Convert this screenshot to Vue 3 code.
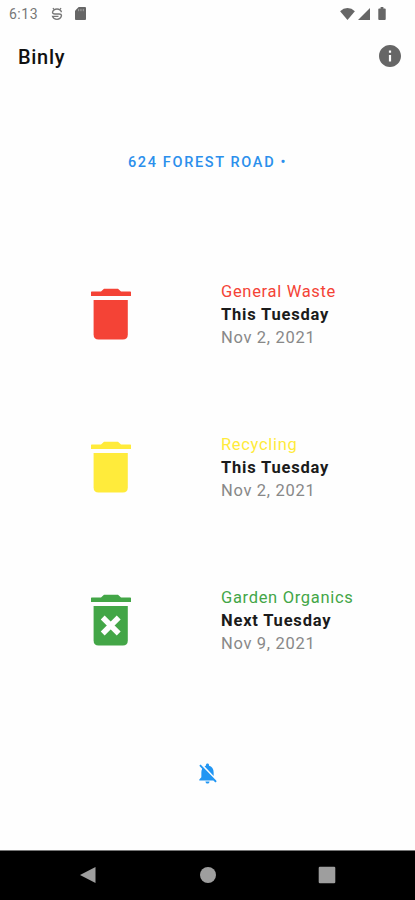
<script setup>
import { ref } from 'vue'

// ============================================================
// Collection data
// ============================================================
const address = ref('624 FOREST ROAD')

const bins = ref([
  { id: 'general', name: 'General Waste', day: 'This Tuesday', date: 'Nov 2, 2021', skipped: false },
  { id: 'recycling', name: 'Recycling', day: 'This Tuesday', date: 'Nov 2, 2021', skipped: false },
  { id: 'garden', name: 'Garden Organics', day: 'Next Tuesday', date: 'Nov 9, 2021', skipped: true }
])
</script>

<template>
  <div class="screen">
    <!-- Status bar -->
    <div class="status-bar">
      <span class="clock">6:13</span>
      <svg class="status-face" viewBox="0 0 12 14">
        <path d="M10.500 5.200Q9.500 2 6 2T1.500 5.200Q1.500 7 4 7h4q2.500 0 2.500 1.800Q9.500 12.300 6 12.300T1.500 9.300h6" />
        <path d="M3 2.500L2 1M9 2.500L10 1" />
      </svg>
      <svg class="status-sd" viewBox="0 0 12 14">
        <path d="M4 0h7q1 0 1 1v12q0 1-1 1H1q-1 0-1-1V4z" />
        <path class="sd-pins" d="M4 2v2.500M6.500 2v2.500M9 2v2.500" />
      </svg>
      <div class="status-right">
        <svg class="wifi" viewBox="0 0 16 13"><path d="M8 13L0 3.500Q3.500 0 8 0t8 3.500z" /></svg>
        <svg class="signal" viewBox="0 0 13 13"><path d="M13 0v13H0z" /></svg>
        <svg class="battery" viewBox="0 0 8 14"><path d="M2.500 0h3v1.500H7q1 0 1 1V13q0 1-1 1H1q-1 0-1-1V2.500q0-1 1-1h1.500z" /></svg>
      </div>
    </div>

    <!-- App bar -->
    <header class="app-bar">
      <h1>Binly</h1>
      <button class="icon-btn" aria-label="About">
        <svg class="info" viewBox="2 2 20 20">
          <path d="M12 2C6.480 2 2 6.480 2 12s4.480 10 10 10 10-4.480 10-10S17.520 2 12 2zm1 15h-2v-6h2v6zm0-8h-2V7h2v2z" />
        </svg>
      </button>
    </header>

    <!-- Address picker -->
    <button class="address">{{ address }} <span class="dot">•</span></button>

    <!-- Bins -->
    <main class="bins">
      <section v-for="bin in bins" :key="bin.id" class="bin" :class="bin.id">
        <svg class="bin-icon" viewBox="0 0 40 52">
          <path d="M0 4.200q0-.7.7-.7H10L13 .7h14l3 2.800h9.300q.7 0 .7.7V8H0z" />
          <path d="M2.600 12h34.200v34.500q0 5-5 5H7.600q-5 0-5-5z" />
          <path v-if="bin.skipped" class="cross" d="M11.700 23.500L27.700 39.500M27.700 23.500L11.700 39.500" />
        </svg>
        <div class="info-text">
          <div class="name">{{ bin.name }}</div>
          <div class="day">{{ bin.day }}</div>
          <div class="date">{{ bin.date }}</div>
        </div>
      </section>
    </main>

    <!-- Reminder toggle -->
    <button class="bell-btn" aria-label="Reminders off">
      <svg class="bell" viewBox="3 2 18 20.500">
        <path d="M20 18.690L7.840 6.140 5.270 3.490 4 4.760l2.800 2.800v.01c-.52.990-.8 2.160-.8 3.420v5l-2 2v1h13.730l2 2L21 19.720l-1-1.030zM12 22c1.110 0 2-.89 2-2h-4c0 1.110.890 2 2 2zm6-7.320V11c0-3.080-1.640-5.640-4.500-6.320V4c0-.83-.67-1.500-1.500-1.500s-1.500.67-1.500 1.500v.68c-.15.030-.29.080-.42.120-.1.030-.2.070-.3.110h-.01c-.01 0-.01 0-.02.010-.23.090-.46.200-.68.310 0 0-.01 0-.01.010L18 14.680z" />
      </svg>
    </button>

    <!-- System navigation -->
    <nav class="nav-bar">
      <svg viewBox="0 0 18 18"><path d="M16.500 1v16L1 9z" /></svg>
      <svg viewBox="0 0 18 18"><circle cx="9" cy="9" r="8" /></svg>
      <svg viewBox="0 0 18 18"><rect x=".7" y=".7" width="16.600" height="16.600" rx="1.200" /></svg>
    </nav>
  </div>
</template>

<style>
body { background: #fff; }
</style>

<style scoped>
.screen {
  width: 415px; height: 900px; overflow: hidden;
  display: flex; flex-direction: column;
  background: #fefefe; font-family: Roboto, "Liberation Sans", sans-serif;
}
button { padding: 0; border: none; background: none; font-family: inherit; cursor: pointer; }
svg { display: block; }

/* Status bar */
.status-bar {
  height: 27px; padding: 0 29px 0 9px; box-sizing: border-box;
  display: flex; align-items: center; fill: #666;
}
.clock { width: 42px; font-size: 14px; letter-spacing: 0.5px; color: #777; }
.status-face { width: 12px; height: 14px; fill: none; stroke: #777; stroke-width: 1.3; }
.status-sd { width: 11px; height: 13px; margin-left: 12px; }
.sd-pins { stroke: #aaa; stroke-width: 1; }
.status-right { display: flex; align-items: center; margin-left: auto; }
.wifi { width: 15px; height: 12px; }
.signal { width: 12px; height: 12px; margin-left: 3px; }
.battery { width: 8px; height: 13px; margin-left: 8px; }

/* App bar */
.app-bar {
  height: 56px; padding: 0 14px 0 18px; box-sizing: border-box;
  display: flex; align-items: center; justify-content: space-between;
}
h1 { margin: 3px 0 0; font-size: 20px; font-weight: 500; letter-spacing: 0.7px; color: #111; }
.info { width: 22px; height: 22px; margin-top: 1px; fill: #666; }

/* Address */
.address {
  height: 36px; margin-top: 61px;
  font-size: 14.500px; font-weight: 500; letter-spacing: 1.650px; color: #2b8fec;
}
.dot { font-size: 14px; }

/* Bin rows */
.bins { margin-top: 57px; }
.bin { height: 153px; padding-left: 90.500px; display: flex; align-items: center; }
.bin-icon { width: 40px; height: 52px; fill: currentColor; }
.cross { fill: none; stroke: #fefefe; stroke-width: 5.5; }
.general { color: #f44336; }
.recycling { color: #ffeb3b; }
.garden { color: #43a647; }
.info-text {
  margin-left: 90.500px; padding-top: 2px;
  font-size: 16.500px; line-height: 23px; letter-spacing: 0.680px; white-space: nowrap;
}
.day { font-weight: 700; letter-spacing: 0.8px; color: #1b1b1b; }
.date { color: #888; }

/* Reminder bell */
.bell-btn { align-self: center; margin-top: 67px; }
.bell { width: 19px; height: 21px; fill: #2196f3; }

/* System navigation */
.nav-bar {
  height: 50px; margin-top: auto; padding: 0 79px; box-sizing: border-box;
  display: flex; align-items: center; justify-content: space-between;
  background: #000; border-top: 1px solid #777; fill: #9e9e9e;
}
.nav-bar svg { width: 18px; height: 18px; margin-top: -1px; }
</style>
